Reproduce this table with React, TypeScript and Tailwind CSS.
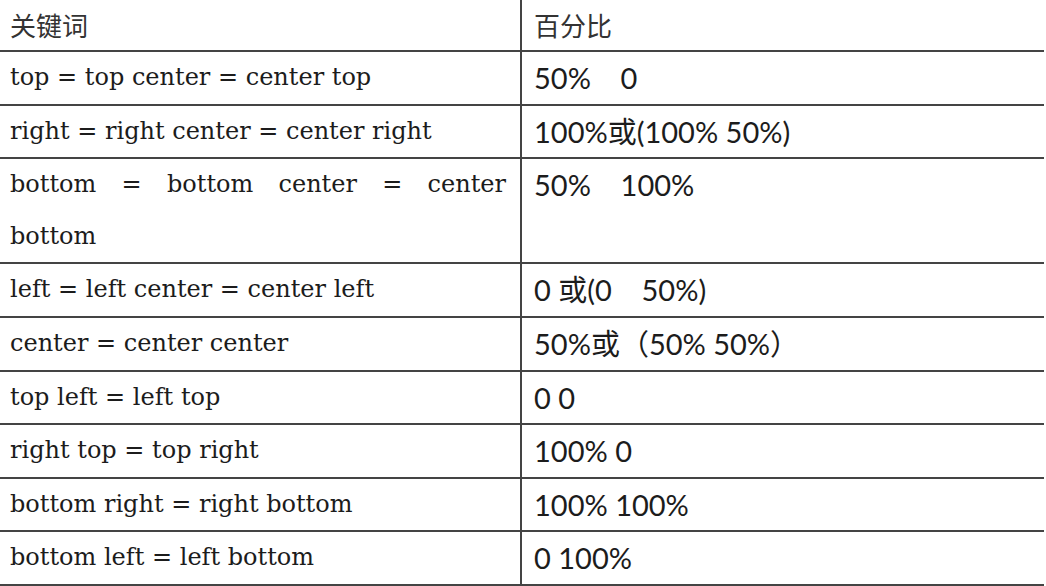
import React from 'react';

const rows: { key: string; value: string }[] = [
    { key: 'top = top center = center top', value: '50%\u00a0\u00a0\u00a0 0' },
    { key: 'right = right center = center right', value: '100%或(100% 50%)' },
    { key: 'bottom = bottom center = center bottom', value: '50%\u00a0\u00a0\u00a0 100%' },
    { key: 'left = left center = center left', value: '0 或(0\u00a0\u00a0\u00a0 50%)' },
    { key: 'center = center center', value: '50%或（50% 50%）' },
    { key: 'top left = left top', value: '0 0' },
    { key: 'right top = top right', value: '100% 0' },
    { key: 'bottom right = right bottom', value: '100% 100%' },
    { key: 'bottom left = left bottom', value: '0 100%' },
];

const serif = "font-['DejaVu_Serif','Noto_Sans_CJK_SC',serif]";
const sans = "font-['Lato','Noto_Sans_CJK_SC',sans-serif]";
const cjk = "font-['Noto_Sans_CJK_SC',sans-serif]";

const App: React.FC = () => {
    return (
        <div className="w-[1046px] h-[586px] overflow-hidden bg-white text-[#1c1c1c]">
            <div className="w-[1044px]">
                <div className="flex border-b-2 border-[#444]">
                    <div className={`w-[522px] shrink-0 border-r-2 border-[#444] pl-[10px] leading-[50px] text-[26px] text-[#333] ${cjk}`}>
                        关键词
                    </div>
                    <div className={`flex-1 pl-[12px] leading-[50px] text-[26px] text-[#333] ${cjk}`}>百分比</div>
                </div>
                {rows.map((r) => (
                    <div key={r.key} className="flex border-b-2 border-[#444]">
                        <div
                            className={`w-[522px] shrink-0 border-r-2 border-[#444] pl-[10px] pr-[14px] leading-[51.6px] text-[24px] text-justify ${serif}`}
                        >
                            {r.key}
                        </div>
                        <div className={`flex-1 pl-[12px] leading-[51.6px] text-[29px] ${sans}`}>{r.value}</div>
                    </div>
                ))}
            </div>
        </div>
    );
};

export default App;
